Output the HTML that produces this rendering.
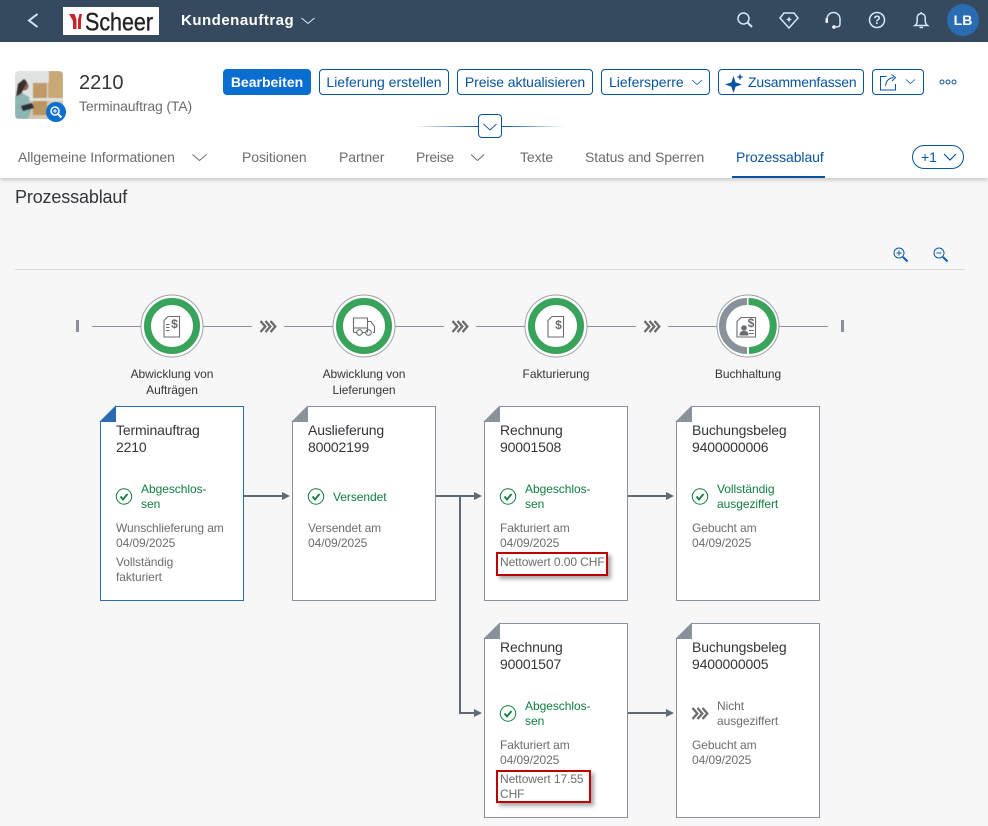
<!DOCTYPE html>
<html lang="de"><head><meta charset="utf-8"><title>Kundenauftrag</title>
<style>
html,body{margin:0;padding:0}
body{width:988px;height:826px;position:relative;overflow:hidden;background:#f7f7f7;font-family:"Liberation Sans",sans-serif;color:#32363a}
.t{position:absolute;white-space:nowrap;line-height:16px}
.hd{position:absolute;left:0;top:0;width:988px;height:42px;background:#354a5f}
.wh{position:absolute;left:0;top:42px;width:988px;height:136px;background:#fff;box-shadow:0 2px 4px rgba(0,0,0,.2)}
.b{position:absolute;top:69px;height:26px;box-sizing:border-box;border:1px solid #0854a0;border-radius:4px;color:#0854a0;font-size:14px;line-height:24px;background:#fff;text-align:center;white-space:nowrap}
.tab{font-size:14px;color:#6a6d70;top:149px;letter-spacing:-.08px}
.lb{font-size:12px;color:#32363a;text-align:center;width:140px;letter-spacing:-.04px}
.card{position:absolute;width:144px;height:195px}
.card .t{left:16px}
.ti{font-size:14px;color:#32363a;letter-spacing:-.15px}
.g{font-size:12px;color:#107e3e;left:41px!important;letter-spacing:-.05px}
.n{font-size:12px;color:#6a6d70;left:41px!important;letter-spacing:-.05px}
.d{font-size:12px;color:#6a6d70;letter-spacing:-.08px}
.red{position:absolute;box-sizing:border-box;border:2px solid #c00000;box-shadow:3px 3px 4px rgba(0,0,0,.35);background:transparent}
svg{position:absolute;overflow:visible}
</style></head><body>

<div class="hd"></div>
<div class="wh"></div>

<svg style="left:0;top:0" width="988" height="42" fill="none" stroke="#d1e8ff" stroke-width="1.5">
<path d="M37.500 14L29 20.500 37.500 27" stroke-width="2"/>
<path d="M301.500 18l6.500 5.500 6.500-5.500" stroke="#d1e8ff" stroke-width="1"/>
<circle cx="743.500" cy="18.500" r="5.500"/><path d="M747.500 22.500l4.500 4.500" stroke-width="2"/>
<path d="M784 13h10l4 5-9 10-9-10z"/><path d="M789 16.500l.9 2.100 2.100.9-2.100.9-.9 2.100-.9-2.100-2.100-.9 2.100-.9z" fill="#d1e8ff" stroke="none"/>
<path d="M827 23v-4a6.500 6.500 0 0 1 13 0v5c0 2-1 3-4 3"/><rect x="825.500" y="18" width="2.500" height="5" rx="1.200" fill="#fff" stroke="none"/><circle cx="834" cy="27" r="1.800" fill="#fff" stroke="none"/>
<circle cx="877" cy="20" r="7.500"/>
<path d="M915 25.500h12.500c-1.500-1-2.300-2.500-2.300-5v-3a4 4 0 0 0-8 0v3c0 2.500-.7 4-2.200 5z"/><path d="M919.500 27.500h3.500" stroke-width="1.500"/><path d="M921.200 12v1.500" stroke-width="1.500"/>
</svg>
<span class="t" style="left:873px;top:12px;color:#d1e8ff;font-size:12px;font-weight:bold;width:8px;text-align:center">?</span>

<div style="position:absolute;left:63px;top:7px;width:96px;height:28px;background:#fff"></div>
<svg style="left:63px;top:7px" width="96" height="28">
<path d="M6 7h5.500l2 5.500V22H10V14z" fill="#c8242b"/>
<path d="M15 22V12.500l1.500-5.500H19l-1 6v9z" fill="#c8242b"/>
<text x="22" y="23.500" font-family="Liberation Sans" font-size="25" fill="#222" stroke="#222" stroke-width=".35" textLength="68" lengthAdjust="spacingAndGlyphs">Scheer</text>
</svg>

<span class="t" style="left:181px;top:13px;font-size:15px;font-weight:bold;color:#fff;letter-spacing:.5px">Kundenauftrag</span>

<div style="position:absolute;left:947px;top:4px;width:32px;height:32px;border-radius:50%;background:#2a6cb2;color:#fff;font-size:14px;font-weight:bold;line-height:32px;text-align:center">LB</div>

<svg style="left:15px;top:71px" width="52" height="52">
<defs><clipPath id="th"><rect width="48" height="48" rx="4"/></clipPath></defs>
<g clip-path="url(#th)">
<rect width="48" height="48" fill="#dfe3e2"/>
<g style="filter:blur(.5px)">
<rect x="14" y="30" width="34" height="18" fill="#d2c5ae"/>
<rect x="34" y="0" width="14" height="11" fill="#c9a877"/>
<rect x="18" y="12" width="14" height="15" fill="#c09a69"/>
<rect x="33" y="11" width="15" height="16" fill="#c9a877"/>
<rect x="18" y="30" width="14" height="14" fill="#bb9462"/>
<circle cx="9" cy="15" r="4.500" fill="#8a6650"/>
<path d="M3 13l6-5 3 3-6 12-5 3z" fill="#3b2f2a"/>
<path d="M0 26l7-4 7 4 2 14-3 8H0z" fill="#8db5b3"/>
<path d="M6 35l11-3 2 5-11 3z" fill="#2d3036"/>
</g>
</g>
<circle cx="41" cy="41" r="10" fill="#0a6ed1"/>
<circle cx="40" cy="40" r="4" fill="none" stroke="#fff" stroke-width="1.500"/>
<path d="M43 43l3.500 3.500" stroke="#fff" stroke-width="2"/><path d="M38 40h4M40 38v4" stroke="#fff"/>
</svg>

<span class="t" style="left:79px;top:73px;font-size:20px;line-height:20px;color:#32363a">2210</span>
<span class="t" style="left:79px;top:98px;font-size:14px;color:#6a6d70;letter-spacing:-.15px">Terminauftrag (TA)</span>

<div class="b" style="left:223px;width:88px;background:#0a6ed1;border-color:#0a6ed1;color:#fff;font-weight:bold">Bearbeiten</div>
<div class="b" style="left:319px;width:130px">Lieferung erstellen</div>
<div class="b" style="left:457px;width:136px;letter-spacing:-.1px">Preise aktualisieren</div>
<div class="b" style="left:601px;width:109px;text-align:left;padding-left:7px">Liefersperre</div>
<div class="b" style="left:718px;width:146px;text-align:left;padding-left:29px;letter-spacing:-.2px">Zusammenfassen</div>
<div class="b" style="left:872px;width:52px"></div>
<svg style="left:0;top:60px" width="988" height="120" fill="none" stroke="#0854a0">
<path d="M692 20l5 4.500 5-4.500" stroke-width=".8"/>
<path d="M733.500 16l2.100 6.400 6.400 2.100-6.400 2.100-2.100 6.400-2.100-6.400-6.400-2.100 6.400-2.100z" fill="#0854a0" stroke="none"/>
<path d="M740 13.500l.9 2.600 2.600.9-2.600.9-.9 2.600-.9-2.600-2.600-.9 2.600-.9z" fill="#0854a0" stroke="none"/>
<path d="M886.500 16.500h-6v13.500h15v-6" stroke-width="1"/>
<path d="M885.500 26c.5-5 3.500-8 8-8.500M891.500 14.500l4 3-3.500 3.500" stroke-width="1"/>
<path d="M906 19.500l4.500 4 4.500-4" stroke="#0854a0" stroke-width=".8"/>
<circle cx="942" cy="22" r="2"/><circle cx="948" cy="22" r="2"/><circle cx="954" cy="22" r="2"/>
</svg>

<div style="position:absolute;left:415px;top:126px;width:63px;height:1px;background:linear-gradient(90deg,#fff,#0854a0)"></div>
<div style="position:absolute;left:502px;top:126px;width:63px;height:1px;background:linear-gradient(90deg,#0854a0,#fff)"></div>
<div class="b" style="left:478px;top:114px;width:24px;height:24px"></div>
<svg style="left:478px;top:114px" width="24" height="24" fill="none" stroke="#0854a0" stroke-width=".9"><path d="M5.500 10l6.500 6 6.500-6"/></svg>

<span class="t tab" style="left:18px">Allgemeine Informationen</span>
<span class="t tab" style="left:242px">Positionen</span>
<span class="t tab" style="left:339px">Partner</span>
<span class="t tab" style="left:416px;letter-spacing:-.3px">Preise</span>
<span class="t tab" style="left:520px">Texte</span>
<span class="t tab" style="left:585px">Status and Sperren</span>
<span class="t tab" style="left:736px;color:#0854a0">Prozessablauf</span>
<div style="position:absolute;left:732px;top:176px;width:93px;height:2px;background:#0854a0"></div>
<svg style="left:0;top:150px" width="988" height="20" fill="none" stroke="#6a6d70">
<path d="M192.500 4.500l7 6 7-6"/><path d="M471 4.500l6.500 6 6.500-6"/>
</svg>
<div style="position:absolute;left:912px;top:145px;width:52px;height:24px;box-sizing:border-box;border:1px solid #0854a0;border-radius:12px"></div>
<span class="t" style="left:921px;top:149px;font-size:14px;color:#0854a0">+1</span>
<svg style="left:940px;top:150px" width="20" height="14" fill="none" stroke="#0854a0" stroke-width="1.200"><path d="M4 4l6 6 6-6"/></svg>

<span class="t" style="left:15px;top:187px;font-size:18px;line-height:20px;color:#32363a;letter-spacing:-.15px">Prozessablauf</span>

<svg style="left:0;top:240px" width="988" height="32" fill="none" stroke="#0a5cb0">
<circle cx="899" cy="13" r="5"/><path d="M903 17l4.500 4.500" stroke-width="2"/><path d="M896.500 13h5M899 10.500v5"/>
<circle cx="939" cy="13" r="5"/><path d="M943 17l4.500 4.500" stroke-width="2"/><path d="M936.500 13h5"/>
</svg>
<div style="position:absolute;left:15px;top:269px;width:950px;height:1px;background:#d9d9d9"></div>

<!-- process header -->
<svg style="left:0;top:285px" width="988" height="90" fill="none">
<g stroke="#89919a">
<path d="M92 41.500h49M203 41.500h49M284 41.500h49M395 41.500h49M476 41.500h49M587 41.500h49M668 41.500h49M779 41.500h49"/>
</g>
<rect x="76" y="35" width="3" height="12" fill="#89919a"/>
<rect x="841" y="35" width="3" height="12" fill="#89919a"/>
<g stroke="#6a6d70" stroke-width="2.300">
<path d="M260.500 36l4.800 5.500-4.800 5.500M265.500 36l4.800 5.500-4.800 5.500M270.500 36l4.800 5.500-4.800 5.500"/>
<path d="M452.500 36l4.800 5.500-4.800 5.500M457.500 36l4.800 5.500-4.800 5.500M462.500 36l4.800 5.500-4.800 5.500"/>
<path d="M644.500 36l4.800 5.500-4.800 5.500M649.500 36l4.800 5.500-4.800 5.500M654.500 36l4.800 5.500-4.800 5.500"/>
</g>
<g fill="#fff" stroke="#9aa1a8">
<circle cx="172" cy="41" r="31"/><circle cx="364" cy="41" r="31"/><circle cx="556" cy="41" r="31"/><circle cx="748" cy="41" r="31"/>
</g>
<g stroke="#3aa35b" stroke-width="7">
<circle cx="172" cy="41" r="24.500"/><circle cx="364" cy="41" r="24.500"/><circle cx="556" cy="41" r="24.500"/>
<path d="M748.500 16.500a24.500 24.500 0 0 1 .5 49"/>
</g>
<path d="M747 16.500a24.500 24.500 0 0 0 0 49" stroke="#89919a" stroke-width="7"/>
<g stroke="#6a6d70" stroke-width="1.100">
<path d="M168 31.500h11.500v20.500h-15.500v-16.500z"/>
<path d="M166 39.500h3.500M166 42.500h3.500M166 45.500h3.500"/>
<path d="M353.500 47.500v-14.500h14v14.500M367.500 36.500h3.500l3.500 5v6h-1.500M353.500 47.500h3M362 47.500h3.500"/>
<circle cx="359.500" cy="47.500" r="2.800"/><circle cx="368.500" cy="47.500" r="2.800"/>
<path d="M353.500 43h14"/>
<path d="M552 31.500h11.500v20.500h-15.500v-16.500z"/>
<path d="M741 32.500h14.500v19.500h-18.500v-15.500z"/>
<path d="M749 45.500h5M749 48.500h5"/>
</g>
<circle cx="744" cy="43" r="2.800" fill="#6a6d70"/><path d="M739.500 50.500c0-3.500 1.500-4.500 4.500-4.500s4.500 1 4.500 4.500z" fill="#6a6d70"/>
<g font-family="Liberation Sans" font-size="12" font-weight="bold" fill="#6a6d70" text-anchor="middle">
<text x="174.500" y="43">$</text><text x="558.500" y="44">$</text><text x="751" y="42">$</text></g>
</svg>
<span class="t lb" style="left:102px;top:366px">Abwicklung von</span>
<span class="t lb" style="left:102px;top:382px">Aufträgen</span>
<span class="t lb" style="left:294px;top:366px">Abwicklung von</span>
<span class="t lb" style="left:294px;top:382px">Lieferungen</span>
<span class="t lb" style="left:486px;top:366px">Fakturierung</span>
<span class="t lb" style="left:678px;top:366px">Buchhaltung</span>

<!-- arrows -->
<svg style="left:0;top:400px" width="988" height="426" fill="none">
<g stroke="#5f6a76" stroke-width="2">
<path d="M244 96h40M436 96h40M460 96v217h16M628 96h38M628 313h38"/>
</g>
<g fill="#5f6a76">
<path d="M282 92l8 4-8 4zM474 92l8 4-8 4zM666 92l8 4-8 4zM474 309l8 4-8 4zM666 309l8 4-8 4z"/>
</g>
<g fill="#fff" stroke="#89919a">
<path d="M115.500 6.500h128v194h-143v-179z" stroke="#2a6cb2"/>
<path d="M307.500 6.500h128v194h-143v-179z"/>
<path d="M499.500 6.500h128v194h-143v-179z"/>
<path d="M691.500 6.500h128v194h-143v-179z"/>
<path d="M499.500 223.500h128v194h-143v-179z"/>
<path d="M691.500 223.500h128v194h-143v-179z"/>
</g>
<path d="M115.500 6.500v15h-15z" fill="#2a6cb2" stroke="#2a6cb2"/>
<g fill="#89919a" stroke="#89919a">
<path d="M307.500 6.500v15h-15zM499.500 6.500v15h-15zM691.500 6.500v15h-15zM499.500 223.500v15h-15zM691.500 223.500v15h-15z"/>
</g>
<g stroke="#107e3e" fill="none">
<circle cx="124" cy="96.500" r="7.700"/><path d="M120.500 96.500l2.500 3 4.500-5.500" stroke-width="1.800"/>
<circle cx="316" cy="96.500" r="7.700"/><path d="M312.500 96.500l2.500 3 4.500-5.500" stroke-width="1.800"/>
<circle cx="508" cy="96.500" r="7.700"/><path d="M504.500 96.500l2.500 3 4.500-5.500" stroke-width="1.800"/>
<circle cx="700" cy="96.500" r="7.700"/><path d="M696.500 96.500l2.500 3 4.500-5.500" stroke-width="1.800"/>
<circle cx="508" cy="313.500" r="7.700"/><path d="M504.500 313.500l2.500 3 4.500-5.500" stroke-width="1.800"/>
</g>
<path d="M692.500 308l4.800 5.500-4.800 5.500M697.500 308l4.800 5.500-4.800 5.500M702.500 308l4.800 5.500-4.800 5.500" stroke="#6a6d70" stroke-width="2.300"/>
</svg>

<div class="card" style="left:100px;top:406px">
<span class="t ti" style="top:16px">Terminauftrag</span><span class="t ti" style="top:33px">2210</span>
<span class="t g" style="top:75px">Abgeschlos-</span><span class="t g" style="top:90px">sen</span>
<span class="t d" style="top:114px">Wunschlieferung am</span><span class="t d" style="top:129px">04/09/2025</span>
<span class="t d" style="top:148px">Vollständig</span><span class="t d" style="top:163px">fakturiert</span>
</div>
<div class="card" style="left:292px;top:406px">
<span class="t ti" style="top:16px">Auslieferung</span><span class="t ti" style="top:33px">80002199</span>
<span class="t g" style="top:83px">Versendet</span>
<span class="t d" style="top:114px">Versendet am</span><span class="t d" style="top:129px">04/09/2025</span>
</div>
<div class="card" style="left:484px;top:406px">
<span class="t ti" style="top:16px">Rechnung</span><span class="t ti" style="top:33px">90001508</span>
<span class="t g" style="top:75px">Abgeschlos-</span><span class="t g" style="top:90px">sen</span>
<span class="t d" style="top:114px">Fakturiert am</span><span class="t d" style="top:129px">04/09/2025</span>
<span class="t d" style="top:148px">Nettowert 0.00 CHF</span>
</div>
<div class="card" style="left:676px;top:406px">
<span class="t ti" style="top:16px">Buchungsbeleg</span><span class="t ti" style="top:33px">9400000006</span>
<span class="t g" style="top:75px">Vollständig</span><span class="t g" style="top:90px">ausgeziffert</span>
<span class="t d" style="top:114px">Gebucht am</span><span class="t d" style="top:129px">04/09/2025</span>
</div>
<div class="card" style="left:484px;top:623px">
<span class="t ti" style="top:16px">Rechnung</span><span class="t ti" style="top:33px">90001507</span>
<span class="t g" style="top:75px">Abgeschlos-</span><span class="t g" style="top:90px">sen</span>
<span class="t d" style="top:114px">Fakturiert am</span><span class="t d" style="top:129px">04/09/2025</span>
<span class="t d" style="top:148px">Nettowert 17.55</span><span class="t d" style="top:163px">CHF</span>
</div>
<div class="card" style="left:676px;top:623px">
<span class="t ti" style="top:16px">Buchungsbeleg</span><span class="t ti" style="top:33px">9400000005</span>
<span class="t n" style="top:75px">Nicht</span><span class="t n" style="top:90px">ausgeziffert</span>
<span class="t d" style="top:114px">Gebucht am</span><span class="t d" style="top:129px">04/09/2025</span>
</div>
<div class="red" style="left:496px;top:552px;width:112px;height:24px"></div>
<div class="red" style="left:496px;top:770px;width:95px;height:33px"></div>
</body></html>
